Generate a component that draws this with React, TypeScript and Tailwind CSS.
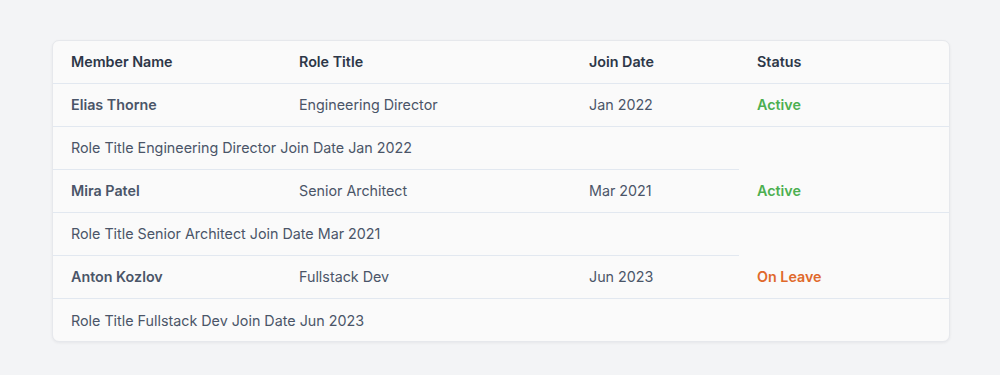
const members = [
  { name: "Elias Thorne", role: "Engineering Director", joined: "Jan 2022", status: "Active" },
  { name: "Mira Patel", role: "Senior Architect", joined: "Mar 2021", status: "Active" },
  { name: "Anton Kozlov", role: "Fullstack Dev", joined: "Jun 2023", status: "On Leave" },
];

export default function App() {
  return (
    <div className="min-h-[375px] w-full bg-[#f3f4f6] pt-[40px] font-['Inter',sans-serif]">
      <div className="ml-[52px] w-[898px] overflow-hidden rounded-[7px] border border-[#e6e8ec] bg-[#fafafa] shadow-[0_1px_3px_rgba(15,23,42,0.06)]">
        <table className="w-full table-fixed border-collapse text-left text-[14.3px]">
          <colgroup>
            <col className="w-[228px]" />
            <col className="w-[290px]" />
            <col className="w-[168px]" />
            <col />
          </colgroup>
          <thead>
            <tr>
              {["Member Name", "Role Title", "Join Date", "Status"].map((h) => (
                <th
                  key={h}
                  className="h-[42px] border-b border-[#e2e8f0] px-[18px] font-semibold text-[#2d3748]"
                >
                  {h}
                </th>
              ))}
            </tr>
          </thead>
          <tbody className="text-[#4a5568]">
            {members.map((m, i) => (
              <>
                <tr key={m.name}>
                  <td className="h-[43px] border-b border-[#e2e8f0] px-[18px] pt-[1px] font-semibold">{m.name}</td>
                  <td className="h-[43px] border-b border-[#e2e8f0] px-[18px] pt-[1px]">{m.role}</td>
                  <td className="h-[43px] border-b border-[#e2e8f0] px-[18px] pt-[1px]">{m.joined}</td>
                  <td
                    className={
                      "h-[43px] border-b border-[#e2e8f0] px-[18px] pt-[1px] font-semibold " +
                      (m.status === "Active" ? "text-[#4caf50]" : "text-[#e0692b]")
                    }
                  >
                    {m.status}
                  </td>
                </tr>
                {/* details row, no status cell */}
                <tr key={m.name + "-detail"}>
                  <td
                    colSpan={3}
                    className={
                      "h-[43px] px-[18px] pt-[1px] " + (i < members.length - 1 ? "border-b border-[#e2e8f0]" : "")
                    }
                  >
                    Role Title {m.role} Join Date {m.joined}
                  </td>
                </tr>
              </>
            ))}
          </tbody>
        </table>
      </div>
    </div>
  );
}
